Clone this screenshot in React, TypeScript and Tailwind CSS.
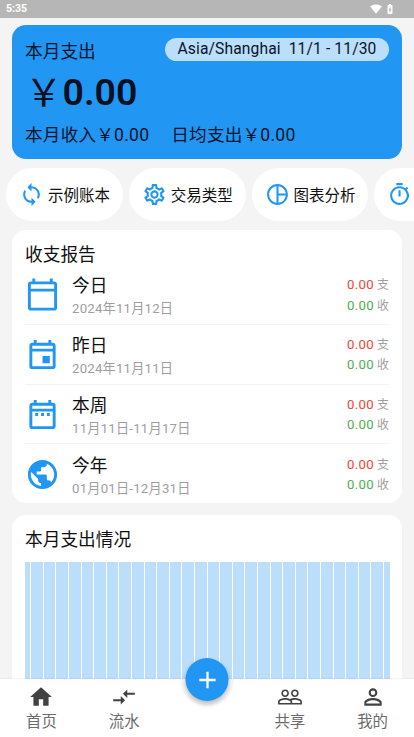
import type { IconType } from "react-icons";
import {
  MdAdd,
  MdBatteryChargingFull,
  MdCompareArrows,
  MdHome,
  MdLoop,
  MdOutlineCalendarToday,
  MdOutlineDateRange,
  MdOutlineEvent,
  MdOutlineSettings,
  MdOutlineTimer,
  MdPeopleOutline,
  MdPersonOutline,
  MdPieChartOutline,
  MdPublic,
  MdSignalWifi4Bar,
} from "react-icons/md";

interface Shortcut {
  id: string;
  label?: string;
  icon: IconType;
}

interface ReportRow {
  title: string;
  range: string;
  icon: IconType;
}

const shortcuts: Shortcut[] = [
  { id: "books", label: "示例账本", icon: MdLoop },
  { id: "types", label: "交易类型", icon: MdOutlineSettings },
  { id: "charts", label: "图表分析", icon: MdPieChartOutline },
  { id: "timer", icon: MdOutlineTimer },
];

const reports: ReportRow[] = [
  { title: "今日", range: "2024年11月12日", icon: MdOutlineCalendarToday },
  { title: "昨日", range: "2024年11月11日", icon: MdOutlineEvent },
  { title: "本周", range: "11月11日-11月17日", icon: MdOutlineDateRange },
  { title: "今年", range: "01月01日-12月31日", icon: MdPublic },
];

const fullBars = Array.from({ length: 28 }, (_, i) => i + 1);

function StatusBar() {
  return (
    <div className="flex h-[18px] shrink-0 items-center justify-between bg-[#b6b6b6] pl-[6px] pr-[18px] text-white">
      <span className="pt-px text-[10.5px] font-bold leading-none">5:35</span>
      <div className="flex items-center gap-[2px]">
        <MdSignalWifi4Bar size={12} />
        <MdBatteryChargingFull size={12} />
      </div>
    </div>
  );
}

function SummaryCard() {
  return (
    <section className="mx-3 mt-[6.5px] h-[134.5px] shrink-0 rounded-[14px] bg-[#2196f3] px-[13px] pt-[13.5px] text-[#07142a]">
      <div className="flex items-start justify-between">
        <span className="pt-px text-[17.7px] leading-[26px]">本月支出</span>
        <span className="h-[23px] whitespace-pre rounded-full bg-[#bbdefb] px-[12.5px] text-[15.6px] leading-[23px] tracking-[0.13px]">
          Asia/Shanghai  11/1 - 11/30
        </span>
      </div>
      <div className="flex h-[56px] items-center text-[37.5px] font-semibold leading-none text-[#04101f]">
        <span className="pb-[6px] font-['Noto_Sans_CJK_SC'] font-normal">￥</span>
        <span>0.00</span>
      </div>
      <div className="flex gap-[22px] pt-[0.5px] text-[17.6px] leading-[26px] tracking-[0.22px]">
        <span>本月收入￥0.00</span>
        <span>日均支出￥0.00</span>
      </div>
    </section>
  );
}

function ShortcutBar() {
  return (
    <div className="mt-[9px] flex shrink-0 gap-[6px] overflow-hidden pl-[6px]">
      {shortcuts.map(({ id, label, icon: Icon }) => (
        <div
          key={id}
          className="flex h-[53px] w-[116.8px] shrink-0 items-center gap-[4px] rounded-full bg-white pl-[13px] text-[15.5px] text-[#111]"
        >
          <Icon size={25} className="shrink-0 text-[#2196f3]" />
          {label && <span className="whitespace-nowrap pt-[4px]">{label}</span>}
        </div>
      ))}
    </div>
  );
}

function ReportCard() {
  return (
    <section className="mx-3 mt-[9px] h-[273px] shrink-0 rounded-[14px] bg-white px-[13px] pt-[12px]">
      <h2 className="text-[17.7px] leading-[26px] text-[#111]">收支报告</h2>
      <div className="-mt-[2.6px] divide-y divide-[#f3f3f3]">
        {reports.map(({ title, range, icon: Icon }) => (
          <div key={title} className="flex h-[59.7px] items-center">
            <Icon size={35} className="shrink-0 text-[#2196f3]" />
            <div className="ml-3 flex-1 pt-1">
              <div className="text-[17.7px] leading-[25px] text-[#111]">{title}</div>
              <div className="text-[13.2px] leading-[20px] tracking-[0.22px] text-[#9e9e9e]">{range}</div>
            </div>
            <div className="pt-[2px] text-right text-[12px] leading-[19.4px] text-[#9e9e9e]">
              <div>
                <span className="text-[13.2px] tracking-[0.35px] text-[#f44336]">0.00</span> 支
              </div>
              <div>
                <span className="text-[13.2px] tracking-[0.35px] text-[#4caf50]">0.00</span> 收
              </div>
            </div>
          </div>
        ))}
      </div>
    </section>
  );
}

function ExpenseChart() {
  return (
    <section className="mx-3 mt-[12px] flex min-h-0 flex-1 flex-col rounded-t-[14px] bg-white px-[12.5px] pt-[12px]">
      <h2 className="pl-[0.5px] text-[17.7px] leading-[26px] text-[#111]">本月支出情况</h2>
      <div className="mt-[9px] flex min-h-0 flex-1 gap-px">
        <div className="w-[5.8px] bg-[#bbdefb]" />
        {fullBars.map((bar) => (
          <div key={bar} className="flex-1 bg-[#bbdefb]" />
        ))}
        <div className="w-[5.8px] bg-[#bbdefb]" />
      </div>
    </section>
  );
}

function NavItem({ label, icon: Icon }: { label: string; icon: IconType }) {
  return (
    <div className="flex flex-1 flex-col items-center pt-[5px] text-[#424242]">
      <Icon size={26} />
      <span className="mt-px text-[15.4px] leading-[22px] text-[#6b6b6b]">{label}</span>
    </div>
  );
}

function BottomNav() {
  return (
    <nav className="relative flex h-[58px] shrink-0 bg-white shadow-[0_-1px_1px_rgba(0,0,0,0.04)]">
      <NavItem label="首页" icon={MdHome} />
      <NavItem label="流水" icon={MdCompareArrows} />
      <div className="flex-1" />
      <NavItem label="共享" icon={MdPeopleOutline} />
      <NavItem label="我的" icon={MdPersonOutline} />
      {/* notch under the add button */}
      <div className="absolute left-1/2 top-0 h-[27px] w-[54px] -translate-x-1/2 rounded-b-full bg-[#f8f8f8]" />
      <button className="absolute left-1/2 top-[-21px] flex size-[43px] -translate-x-1/2 items-center justify-center rounded-full bg-[#2196f3] text-white shadow-[0_3px_5px_rgba(0,0,0,0.25)]">
        <MdAdd size={28} />
      </button>
    </nav>
  );
}

export default function App() {
  return (
    <div className="flex h-[737px] w-[414px] flex-col overflow-hidden bg-[#f4f4f4] font-[Roboto,'Noto_Sans_CJK_SC',sans-serif]">
      <StatusBar />
      <SummaryCard />
      <ShortcutBar />
      <ReportCard />
      <ExpenseChart />
      <BottomNav />
    </div>
  );
}
